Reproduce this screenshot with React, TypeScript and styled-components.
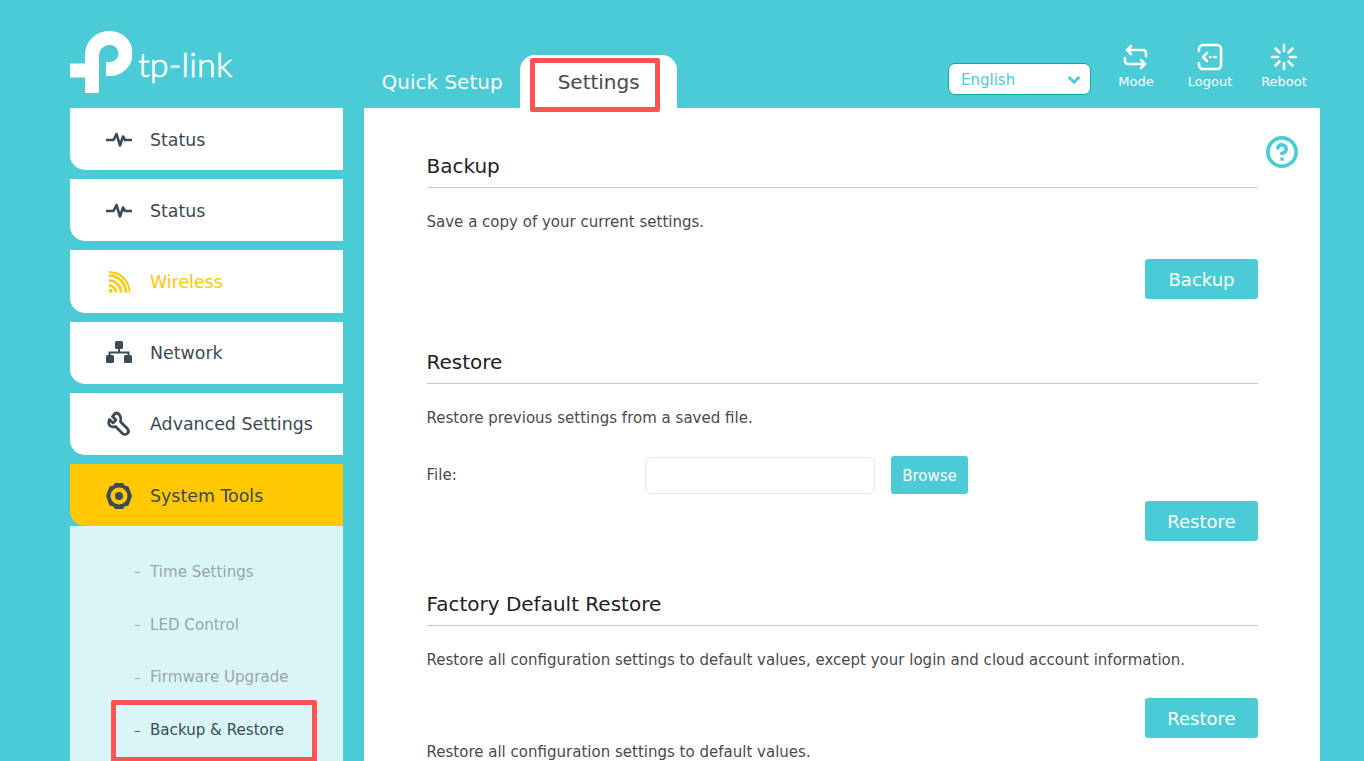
import React from "react";
import styled, { createGlobalStyle } from "styled-components";
import { ChevronDown, CircleHelp } from "lucide-react";

const ACCENT = "#4acbd6";
const YELLOW = "#ffc800";
const DARK = "#3c4a54";

const GlobalStyle = createGlobalStyle`
  html, body {
    margin: 0;
    height: 100%;
    overflow: hidden;
    background: ${ACCENT};
    font-family: "DejaVu Sans", Verdana, sans-serif;
  }
  * { box-sizing: border-box; }
`;

const Page = styled.div`
  width: 1250px;
  height: 761px;
  margin-left: 70px;
  overflow: hidden;
`;

/* Header */

const Header = styled.header`
  display: flex;
  align-items: flex-end;
  height: 108px;
`;

const Logo = styled.div`
  display: flex;
  align-items: flex-end;
  width: 294px;
  height: 77px;
  padding-bottom: 15px;
`;

const LogoText = styled.span`
  margin: 0 0 11px 6px;
  font-family: Lato, sans-serif;
  font-size: 34px;
  line-height: 36px;
  font-weight: 300;
  letter-spacing: 0.2px;
  color: #fff;
  -webkit-text-stroke: 0.7px #fff;
`;

const Tab = styled.div<{ $active?: boolean }>`
  position: relative;
  display: flex;
  align-items: center;
  height: 53px;
  padding: 0 ${(p) => (p.$active ? "37.500px 0 37.500px" : "17.500px 0 17.500px")};
  border-radius: 15px 15px 0 0;
  font-size: 20px;
  color: ${(p) => (p.$active ? "#4a4a4a" : "#fff")};
  background: ${(p) => (p.$active ? "#fff" : "transparent")};
`;

const Highlight = styled.div`
  position: absolute;
  border: 5px solid #ff5252;
  border-radius: 2px;
  pointer-events: none;
`;

const TabHighlight = styled(Highlight)`
  top: 3px;
  left: 10px;
  width: 130px;
  height: 54px;
  z-index: 2;
`;

const LanguageSelect = styled.div`
  display: flex;
  align-items: center;
  justify-content: space-between;
  width: 143px;
  height: 32px;
  margin: 0 8px 13px auto;
  padding: 1px 7px 0 12px;
  background: #fff;
  border: 1px solid #0aa6ae;
  border-radius: 7px;
  font-size: 15px;
  color: ${ACCENT};
`;

const HeaderAction = styled.div`
  display: flex;
  flex-direction: column;
  align-items: center;
  width: 74px;
  margin-bottom: 18px;
  font-size: 13px;
  line-height: 16px;
  color: #fff;

  svg {
    display: block;
    margin-bottom: 3px;
  }
`;

const HeaderActions = styled.div`
  display: flex;
  margin-right: -1px;
`;

/* Body */

const Body = styled.div`
  display: flex;
  gap: 21px;
`;

const Sidebar = styled.nav`
  display: flex;
  flex-direction: column;
  gap: 9px;
  flex: 0 0 273px;
`;

const MenuItem = styled.div<{ $tone?: "open" | "wireless" }>`
  display: flex;
  align-items: center;
  flex: 0 0 62.200px;
  padding: 1px 0 0 36px;
  gap: 18px;
  border-radius: 0 0 0 15px;
  font-size: 17.400px;
  color: ${(p) => (p.$tone === "wireless" ? YELLOW : DARK)};
  background: ${(p) => (p.$tone === "open" ? YELLOW : "#fff")};
`;

const MenuIcon = styled.svg`
  flex: 0 0 26px;
  width: 26px;
  height: 26px;
`;

const SubMenu = styled.div`
  flex: 0 0 240px;
  margin-top: -9px;
  padding-top: 19.500px;
  background: #daf5f7;
`;

const SubItem = styled.div<{ $current?: boolean }>`
  position: relative;
  display: flex;
  align-items: center;
  height: 52.700px;
  padding-left: 64px;
  font-size: 15.100px;
  color: ${(p) => (p.$current ? DARK : "#98a6a8")};

  &::before {
    content: "–";
    width: 16px;
    font-size: 13px;
  }
`;

const SubHighlight = styled(Highlight)`
  top: -4px;
  left: 41px;
  width: 206px;
  height: 62px;
`;

const Main = styled.main`
  position: relative;
  flex: 0 0 956px;
  height: 653px;
  padding: 36px 62px 0 62.500px;
  background: #fff;
`;

const HelpButton = styled.div`
  position: absolute;
  top: 27px;
  right: 21px;
  color: ${ACCENT};

  svg {
    display: block;
  }
`;

const Section = styled.section`
  & + & {
    margin-top: 41px;
  }
`;

const SectionTitle = styled.h2`
  margin: 0;
  height: 44px;
  border-bottom: 1px solid #c8c8c8;
  font-size: 20px;
  font-weight: 400;
  line-height: 44px;
  color: #222;
`;

const Description = styled.p<{ $tight?: boolean }>`
  margin: ${(p) => (p.$tight ? "4px" : "24px")} 0 0;
  font-size: 15.030px;
  line-height: 20px;
  color: #4a4a4a;
`;

const ActionRow = styled.div<{ $gap: number }>`
  display: flex;
  justify-content: flex-end;
  margin-top: ${(p) => p.$gap}px;
`;

const Button = styled.button`
  width: 113px;
  height: 40px;
  padding: 0;
  border: 0;
  border-radius: 3px;
  background: ${ACCENT};
  color: #fff;
  font-family: inherit;
  font-size: 18px;
`;

const FileRow = styled.div`
  display: flex;
  align-items: center;
  margin-top: 28px;
  font-size: 15.030px;
  color: #4a4a4a;
`;

const FileLabel = styled.span`
  width: 218.500px;
`;

const FileInput = styled.div`
  width: 230px;
  height: 37px;
  margin-top: 1px;
  border: 1px solid #e6e6e6;
  border-radius: 6px;
`;

const BrowseButton = styled(Button)`
  width: 77px;
  height: 38px;
  margin-left: 16px;
  padding-top: 1px;
  font-size: 15px;
`;

const WhiteIcon = styled.svg`
  width: 28px;
  height: 28px;
  fill: none;
  stroke: #fff;
  stroke-width: 2.600;
  stroke-linecap: round;
  stroke-linejoin: round;
`;

const PulseIcon = () => (
  <MenuIcon viewBox="0 0 26 26" fill="none" stroke={DARK} strokeWidth="2.600" strokeLinejoin="round">
    <path d="M0 13h7.500l3-6 3.500 11.500 3-9 2 3.500h7" />
  </MenuIcon>
);

const WirelessIcon = () => (
  <MenuIcon viewBox="0 0 26 26" fill="none" stroke={YELLOW} strokeWidth="2.600">
    <path d="M3 16.500a7 7 0 0 1 7 7" />
    <path d="M3 11.500a12 12 0 0 1 12 12" />
    <path d="M3 6.500a17 17 0 0 1 17 17" />
    <path d="M3 3a20.500 20.500 0 0 1 20.500 20.500" strokeWidth="1.800" />
    <rect x="3" y="20" width="3.500" height="3.500" fill={YELLOW} stroke="none" />
  </MenuIcon>
);

const NetworkIcon = () => (
  <MenuIcon viewBox="0 0 26 26" fill={DARK}>
    <rect x="9" y="1" width="8" height="8" rx="1.500" />
    <rect x="0" y="15" width="8" height="8" rx="1.500" />
    <rect x="18" y="15" width="8" height="8" rx="1.500" />
    <path d="M12 9h2v2.500h9.500V15h-2v-1.500h-17V15h-2v-3.500H12z" />
  </MenuIcon>
);

const WrenchIcon = () => (
  <MenuIcon viewBox="0 0 26 26" fill="none" stroke={DARK} strokeWidth="2.800" strokeLinejoin="round">
    <path d="M9.500 2 6.500 5.500l3.500 3.500-3 3-3.500-3.500C1 14 5 17 9.500 15.500l7 7c1.300 1.200 3.500 1.200 4.800 0 1.400-1.300 1.400-3.300.2-4.700l-7-7C16 6 13 1.800 9.500 2z" />
  </MenuIcon>
);

const GearIcon = () => (
  <MenuIcon viewBox="0 0 26 26" fill={DARK}>
    <path
      fillRule="evenodd"
      d="M9 0h8l1.500 2.500 4 1L26 13l-3.500 9.500-4 1L17 26H9l-1.500-2.500-4-1L0 13l3.500-9.500 4-1zM13 4.500a8.500 8.500 0 1 0 0 17 8.500 8.500 0 0 0 0-17z"
    />
    <circle cx="13" cy="13" r="4" />
  </MenuIcon>
);

const App: React.FC = () => (
  <>
    <GlobalStyle />
    <Page>
      <Header>
        <Logo>
          <svg width="62" height="62" viewBox="0 0 62 62" fill="none" stroke="#fff" strokeWidth="14">
            <path d="M22 34V24A17 17 0 0 1 39 7h1a15.500 15.500 0 0 1 0 31h-4" />
            <path d="M22 62V39.500H0" />
          </svg>
          <LogoText>tp-link</LogoText>
        </Logo>
        <Tab>Quick Setup</Tab>
        <Tab $active>
          Settings
          <TabHighlight />
        </Tab>
        <LanguageSelect>
          English
          <ChevronDown size={18} strokeWidth={4} />
        </LanguageSelect>
        <HeaderActions>
          <HeaderAction>
            <WhiteIcon viewBox="0 0 28 28">
              <path d="M9 3 5 7l4 4" />
              <path d="M6 7h15a3 3 0 0 1 3 3v3" />
              <path d="M19 25l4-4-4-4" />
              <path d="M22 21H6a3 3 0 0 1-3-3v-3" />
            </WhiteIcon>
            Mode
          </HeaderAction>
          <HeaderAction>
            <WhiteIcon viewBox="0 0 28 28">
              <path d="M3 8V6a4 4 0 0 1 4-4h14a4 4 0 0 1 4 4v16a4 4 0 0 1-4 4H7a4 4 0 0 1-4-4v-2" />
              <path d="M11 10l-4 4 4 4" />
              <path d="M14 14h.500M18 14h2" />
            </WhiteIcon>
            Logout
          </HeaderAction>
          <HeaderAction>
            <WhiteIcon viewBox="0 0 28 28">
              <path d="M14 2v6M14 20v6M2 14h6M20 14h6M5.500 5.500l4 4M18.500 18.500l4 4M22.500 5.500l-4 4M9.500 18.500l-4 4" />
            </WhiteIcon>
            Reboot
          </HeaderAction>
        </HeaderActions>
      </Header>
      <Body>
        <Sidebar>
          <MenuItem>
            <PulseIcon />
            Status
          </MenuItem>
          <MenuItem>
            <PulseIcon />
            Status
          </MenuItem>
          <MenuItem $tone="wireless">
            <WirelessIcon />
            Wireless
          </MenuItem>
          <MenuItem>
            <NetworkIcon />
            Network
          </MenuItem>
          <MenuItem>
            <WrenchIcon />
            Advanced Settings
          </MenuItem>
          <MenuItem $tone="open">
            <GearIcon />
            System Tools
          </MenuItem>
          <SubMenu>
            <SubItem>Time Settings</SubItem>
            <SubItem>LED Control</SubItem>
            <SubItem>Firmware Upgrade</SubItem>
            <SubItem $current>
              Backup &amp; Restore
              <SubHighlight />
            </SubItem>
          </SubMenu>
        </Sidebar>
        <Main>
          <HelpButton>
            <CircleHelp size={34} strokeWidth={2.600} />
          </HelpButton>
          <Section>
            <SectionTitle>Backup</SectionTitle>
            <Description>Save a copy of your current settings.</Description>
            <ActionRow $gap={27}>
              <Button>Backup</Button>
            </ActionRow>
          </Section>
          <Section>
            <SectionTitle>Restore</SectionTitle>
            <Description>Restore previous settings from a saved file.</Description>
            <FileRow>
              <FileLabel>File:</FileLabel>
              <FileInput />
              <BrowseButton>Browse</BrowseButton>
            </FileRow>
            <ActionRow $gap={7}>
              <Button>Restore</Button>
            </ActionRow>
          </Section>
          <Section>
            <SectionTitle>Factory Default Restore</SectionTitle>
            <Description>
              Restore all configuration settings to default values, except your login and cloud account information.
            </Description>
            <ActionRow $gap={28}>
              <Button>Restore</Button>
            </ActionRow>
            <Description $tight>Restore all configuration settings to default values.</Description>
          </Section>
        </Main>
      </Body>
    </Page>
  </>
);

export default App;
